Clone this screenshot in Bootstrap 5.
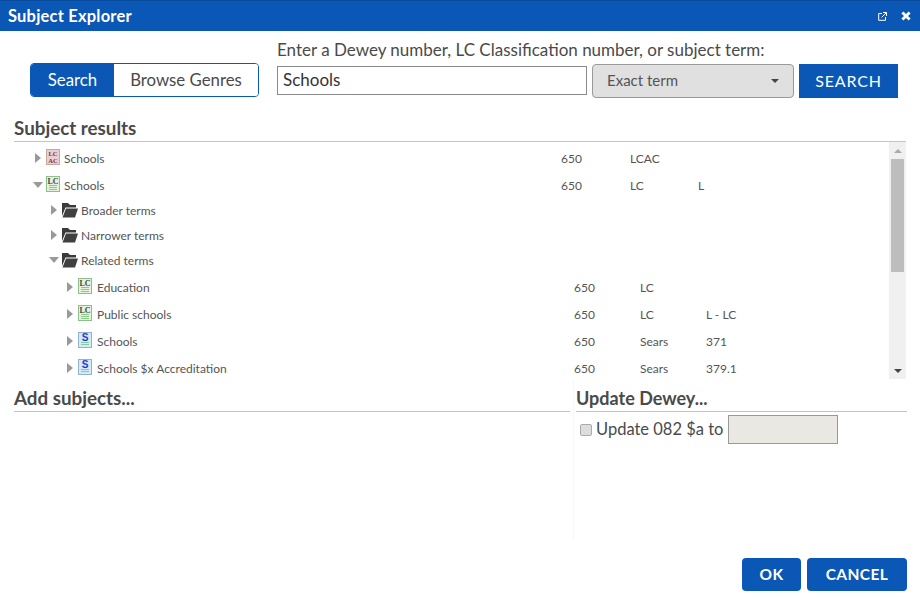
<!DOCTYPE html>
<html lang="en">
<head>
<meta charset="utf-8">
<title>Subject Explorer</title>
<link href="https://cdn.jsdelivr.net/npm/bootstrap@5.3.0/dist/css/bootstrap.min.css" rel="stylesheet">
<style>
html,body{height:100%;overflow:hidden}
body{font-family:Lato,"Liberation Sans",sans-serif;color:#4a4a4a;background:#fff;width:920px;height:598px}
.dlg-title{height:31px;background:#0a57b6;border-top:1px solid #084a9c;padding:0 9px 0 8px;color:#fff}
.dlg-title h1{font-size:16.5px;font-weight:700;margin:0;line-height:1;letter-spacing:.2px}
.title-tools{gap:14px}
.search-area{height:80px;padding:0 22px 0 30px}
.mode-group{margin-top:32px;width:229px;height:34px;border:1px solid #0a57b6;border-radius:4px;overflow:hidden;font-size:16.8px}
.mode-on{width:83px;background:#0a57b6;color:#fff}
.mode-off{flex:1;background:#fff;color:#4a4a4a}
.search-fields{margin-left:18px;width:621px}
.search-label{font-size:17px;line-height:20px;margin:9px 0 4px;color:#4a4a4a;white-space:nowrap}
.term-input{width:310px;height:29px;border:1px solid #8a8a8a;font-size:17px;padding:0 5px 2px;color:#333;background:#fff;margin-top:2px;outline:0;border-radius:0;font-family:inherit}
.type-select{width:202px;height:34px;margin-left:5px;background:#e0e0e0;border:1px solid #999;border-radius:4px;font-size:15px;padding:0 14px 2px;color:#555}
.caret-d{width:0;height:0;border-left:4px solid transparent;border-right:4px solid transparent;border-top:4px solid #444;margin-top:2px}
.go-btn{width:99px;height:34px;margin-left:5px;background:#0a57b6;color:#fff;font-size:16px;letter-spacing:.8px;border:0;border-radius:0}
.sec-head{font-size:18.8px;font-weight:700;line-height:22px;margin:0;color:#4a4a4a;border-bottom:1px solid #c4c4c4;height:31px;padding-top:6px}
.results{margin:0 14px}
.tree-wrap{height:237px;overflow:hidden}
.tree-body{flex:1;overflow:hidden;font-size:12px;color:#555}
.tree-row{display:flex;align-items:center;white-space:nowrap}
.h27{height:27px;padding-top:7px}.h25{height:25px;padding-top:5px}
.h27.l2{padding-top:7px}
.l0{padding-left:17px}.l1{padding-left:33px}.l2{padding-left:49px}
.tw{width:13px;margin-right:2px;flex:none;display:flex;justify-content:center}
.tw-r{width:0;height:0;border-top:5px solid transparent;border-bottom:5px solid transparent;border-left:6px solid #999;margin-top:-3px}
.tw-d{width:0;height:0;border-left:5.5px solid transparent;border-right:5.5px solid transparent;border-top:6px solid #999;margin-top:-3px}
.ic{flex:none;margin-top:-5px;display:block}
.nm{flex:none;margin-left:5px}
.l0 .nm{width:497px;margin-left:4px}
.l1 .ic{margin-left:-1px;margin-top:-2px}
.l1 .nm{margin-left:3px}
.l2 .nm{width:477px}
.c1{width:69px;flex:none}.l2 .c1{width:66px}
.c2{width:68px;flex:none}.l2 .c2{width:66px}
.sb{width:17px;flex:none;background:#f0f0f0;display:flex;flex-direction:column;align-items:center}
.sb-t{width:13px;height:113px;background:#bdbdbd;flex:none}
.sb-a{height:17px;display:flex;align-items:center;justify-content:center;flex:none}
.up{width:0;height:0;border-left:4px solid transparent;border-right:4px solid transparent;border-bottom:4px solid #aaa}
.dn{width:0;height:0;border-left:4px solid transparent;border-right:4px solid transparent;border-top:4px solid #444}
.lower{margin:2px 13px 0 14px;height:158px}
.add-col{width:556px;flex:none}
.upd-col{flex:1;margin-left:3px;padding-left:2px;border-left:1px solid #f7f7f7}
.upd-col .sec-head{font-size:18px}
.upd-line{font-size:16.5px;padding:3px 0 0 4px;color:#4a4a4a}
.upd-line .chk{appearance:none;width:12px;height:12px;margin:0 4px 0 0;background:#ddd;border:1px solid #aaa;border-radius:2px;flex:none}
.dewey{width:110px;height:29px;background:#e9e8e2;border:1px solid #999;margin-left:5px;border-radius:0;padding:0}
.foot{padding:19px 13px 0 0}
.foot-btn{height:33px;background:#0a57b6;color:#fff;border:0;border-radius:4px;font-weight:700;font-size:15.5px;letter-spacing:.4px;padding:0}
.w-ok{width:59px}.w-cn{width:100px;margin-left:6px}
</style>
</head>
<body>
<div class="dlg-title d-flex align-items-center">
  <h1>Subject Explorer</h1>
  <div class="ms-auto d-flex align-items-center title-tools">
    <svg width="9" height="9" viewBox="0 0 9 9" class="d-block" aria-hidden="true"><path d="M4 1.500H.7v6.800h6.800V5M5 .5h3.500V4M8.300.7 3.600 5.400" fill="none" stroke="#fff" stroke-width="1"/></svg>
    <svg width="10" height="10" viewBox="0 0 10 10" class="d-block" aria-hidden="true"><path d="M1.400 1.400l7.200 7.200M8.600 1.400 1.400 8.600" stroke="#fff" stroke-width="2.800"/></svg>
  </div>
</div>

<div class="search-area d-flex">
  <div class="mode-group d-flex flex-none">
    <div class="mode-on d-flex align-items-center justify-content-center">Search</div>
    <div class="mode-off d-flex align-items-center justify-content-center">Browse Genres</div>
  </div>
  <div class="search-fields">
    <div class="search-label">Enter a Dewey number, LC Classification number, or subject term:</div>
    <div class="d-flex align-items-start">
      <input class="term-input" type="text" value="Schools">
      <div class="type-select d-flex align-items-center justify-content-between">Exact term<span class="caret-d"></span></div>
      <button class="go-btn" type="button">SEARCH</button>
    </div>
  </div>
</div>

<div class="results">
  <h2 class="sec-head">Subject results</h2>
  <div class="tree-wrap d-flex">
    <div class="tree-body">
      <div class="tree-row h27 l0"><span class="tw"><span class="tw-r"></span></span><svg class="ic" width="14" height="16" viewBox="0 0 14 16"><rect x=".5" y=".5" width="13" height="15" fill="#e9cfd2" stroke="#c9a89a"/><text x="7" y="7" font-family="Liberation Serif" font-weight="700" font-size="6.500" text-anchor="middle" fill="#7a2f45">LC</text><text x="7" y="14" font-family="Liberation Serif" font-weight="700" font-size="6.500" text-anchor="middle" fill="#7a2f45">AC</text></svg><span class="nm">Schools</span><span class="c1">650</span><span class="c2">LCAC</span></div>
      <div class="tree-row h27 l0"><span class="tw"><span class="tw-d"></span></span><svg class="ic" width="14" height="16" viewBox="0 0 14 16"><rect x=".5" y=".5" width="13" height="15" fill="#e4f2dc" stroke="#8cc08c"/><text x="7" y="7.500" font-family="Liberation Serif" font-weight="700" font-size="8" text-anchor="middle" fill="#444">LC</text><path d="M3 9.500h8M3 11.500h8M3 13.500h8" stroke="#8ccb8c"/></svg><span class="nm">Schools</span><span class="c1">650</span><span class="c2">LC</span><span>L</span></div>
      <div class="tree-row h25 l1"><span class="tw"><span class="tw-r"></span></span><svg class="ic" width="17" height="16" viewBox="0 0 17 16"><path d="M1 1h6l2 2h6v2.500H4.500L1 14Z" fill="#3a3a3a"/><path d="M5 6.500h12l-3 9H1.500Z" fill="#404040"/></svg><span class="nm">Broader terms</span></div>
      <div class="tree-row h25 l1"><span class="tw"><span class="tw-r"></span></span><svg class="ic" width="17" height="16" viewBox="0 0 17 16"><path d="M1 1h6l2 2h6v2.500H4.500L1 14Z" fill="#3a3a3a"/><path d="M5 6.500h12l-3 9H1.500Z" fill="#404040"/></svg><span class="nm">Narrower terms</span></div>
      <div class="tree-row h25 l1"><span class="tw"><span class="tw-d"></span></span><svg class="ic" width="17" height="16" viewBox="0 0 17 16"><path d="M1 1h6l2 2h6v2.500H4.500L1 14Z" fill="#3a3a3a"/><path d="M5 6.500h12l-3 9H1.500Z" fill="#404040"/></svg><span class="nm">Related terms</span></div>
      <div class="tree-row h27 l2"><span class="tw"><span class="tw-r"></span></span><svg class="ic" width="14" height="16" viewBox="0 0 14 16"><rect x=".5" y=".5" width="13" height="15" fill="#e4f2dc" stroke="#8cc08c"/><text x="7" y="7.500" font-family="Liberation Serif" font-weight="700" font-size="8" text-anchor="middle" fill="#444">LC</text><path d="M3 9.500h8M3 11.500h8M3 13.500h8" stroke="#8ccb8c"/></svg><span class="nm">Education</span><span class="c1">650</span><span class="c2">LC</span></div>
      <div class="tree-row h27 l2"><span class="tw"><span class="tw-r"></span></span><svg class="ic" width="14" height="16" viewBox="0 0 14 16"><rect x=".5" y=".5" width="13" height="15" fill="#e4f2dc" stroke="#8cc08c"/><text x="7" y="7.500" font-family="Liberation Serif" font-weight="700" font-size="8" text-anchor="middle" fill="#444">LC</text><path d="M3 9.500h8M3 11.500h8M3 13.500h8" stroke="#8ccb8c"/></svg><span class="nm">Public schools</span><span class="c1">650</span><span class="c2">LC</span><span>L - LC</span></div>
      <div class="tree-row h27 l2"><span class="tw"><span class="tw-r"></span></span><svg class="ic" width="14" height="16" viewBox="0 0 14 16"><rect x=".5" y=".5" width="13" height="15" fill="#d6e9f7" stroke="#8fb4cf"/><text x="7" y="8.500" font-family="Liberation Sans" font-weight="700" font-size="10" text-anchor="middle" fill="#1a3fc4">S</text><path d="M3 10.500h8M3 12.500h8" stroke="#88c9a8"/></svg><span class="nm">Schools</span><span class="c1">650</span><span class="c2">Sears</span><span>371</span></div>
      <div class="tree-row h27 l2"><span class="tw"><span class="tw-r"></span></span><svg class="ic" width="14" height="16" viewBox="0 0 14 16"><rect x=".5" y=".5" width="13" height="15" fill="#d6e9f7" stroke="#8fb4cf"/><text x="7" y="8.500" font-family="Liberation Sans" font-weight="700" font-size="10" text-anchor="middle" fill="#1a3fc4">S</text><path d="M3 10.500h8M3 12.500h8" stroke="#88c9a8"/></svg><span class="nm">Schools $x Accreditation</span><span class="c1">650</span><span class="c2">Sears</span><span>379.1</span></div>
    </div>
    <div class="sb">
      <span class="sb-a"><span class="up"></span></span>
      <div class="sb-t"></div>
      <span class="flex-grow-1"></span>
      <span class="sb-a"><span class="dn"></span></span>
    </div>
  </div>
</div>

<div class="lower d-flex">
  <div class="add-col"><h2 class="sec-head">Add subjects...</h2></div>
  <div class="upd-col">
    <h2 class="sec-head">Update Dewey...</h2>
    <div class="upd-line d-flex align-items-center"><input class="chk" type="checkbox" aria-label="Update 082 $a">Update 082 $a to<input class="dewey" type="text" disabled aria-label="082 $a value"></div>
  </div>
</div>

<div class="foot d-flex justify-content-end">
  <button class="foot-btn w-ok" type="button">OK</button>
  <button class="foot-btn w-cn" type="button">CANCEL</button>
</div>
<script src="https://cdn.jsdelivr.net/npm/bootstrap@5.3.0/dist/js/bootstrap.bundle.min.js"></script>
</body>
</html>
